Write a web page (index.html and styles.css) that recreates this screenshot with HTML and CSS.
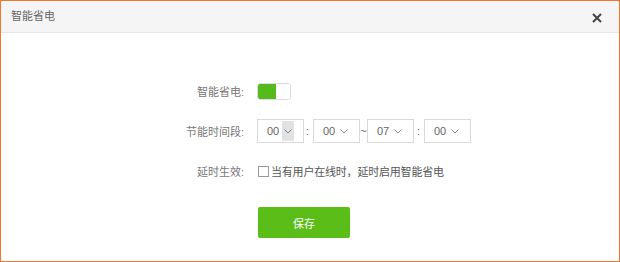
FILE: index.html
```html
<!DOCTYPE html>
<html lang="zh-CN">
<head>
    <meta charset="UTF-8">
    <title>智能省电</title>
    <link rel="stylesheet" href="styles.css">
</head>
<body>
    <div class="dialog">
        <div class="dialog-header">
            <h1>智能省电</h1>
            <span class="close-btn">
                <svg width="10" height="10" viewBox="0 0 10 10"><path d="M1 1L9 9M9 1L1 9" stroke="#444" stroke-width="2" fill="none"/></svg>
            </span>
        </div>

        <div class="dialog-body">
            <div class="form-row">
                <label class="form-label">智能省电:</label>
                <div class="switch">
                    <span class="switch-on"></span>
                    <span class="switch-off"></span>
                </div>
            </div>

            <div class="form-row">
                <label class="form-label">节能时间段:</label>
                <div class="time-select active">
                    <span>00</span>
                    <span class="arrow"><svg width="8" height="5" viewBox="0 0 8 5"><path d="M0.5 0.5L4 4L7.5 0.5" stroke="#888" fill="none"/></svg></span>
                </div>
                <span class="sep sep-colon">:</span>
                <div class="time-select">
                    <span>00</span>
                    <span class="arrow"><svg width="8" height="5" viewBox="0 0 8 5"><path d="M0.5 0.5L4 4L7.5 0.5" stroke="#888" fill="none"/></svg></span>
                </div>
                <span class="sep sep-tilde">~</span>
                <div class="time-select">
                    <span>07</span>
                    <span class="arrow"><svg width="8" height="5" viewBox="0 0 8 5"><path d="M0.5 0.5L4 4L7.5 0.5" stroke="#888" fill="none"/></svg></span>
                </div>
                <span class="sep sep-colon2">:</span>
                <div class="time-select">
                    <span>00</span>
                    <span class="arrow"><svg width="8" height="5" viewBox="0 0 8 5"><path d="M0.5 0.5L4 4L7.5 0.5" stroke="#888" fill="none"/></svg></span>
                </div>
            </div>

            <div class="form-row">
                <label class="form-label">延时生效:</label>
                <span class="checkbox"></span>
                <span class="checkbox-text">当有用户在线时，延时启用智能省电</span>
            </div>

            <div class="form-actions">
                <button class="save-btn">保存</button>
            </div>
        </div>
    </div>
</body>
</html>
```

FILE: styles.css
```css
* {
    margin: 0;
    padding: 0;
    box-sizing: border-box;
}

body {
    font-family: "Liberation Sans", "Noto Sans CJK SC", sans-serif;
    font-size: 11px;
    background: white;
}

.dialog {
    width: 620px;
    height: 262px;
    border: 1px solid #f2772f;
    background: white;
}

.dialog-header {
    height: 32px;
    background: #f5f5f5;
    border-bottom: 1px solid #e6e6e6;
    display: flex;
    align-items: center;
    justify-content: space-between;
    padding: 0 17px 0 10px;
}

.dialog-header h1 {
    font-size: 11px;
    font-weight: normal;
    color: #666;
    margin-top: -3px;
}

.close-btn {
    display: flex;
    margin-top: 2px;
}

.dialog-body {
    padding-top: 46px;
}

.form-row {
    display: flex;
    align-items: center;
    height: 24px;
    margin-bottom: 16px;
}

.form-label {
    width: 245px;
    margin-right: 11px;
    text-align: right;
    color: #777;
    padding-right: 2px;
}

.switch {
    display: flex;
    width: 34px;
    height: 17px;
    border: 1px solid #dcdcdc;
    border-radius: 3px;
    overflow: hidden;
}

.switch-on {
    width: 18px;
    background: #55bb1c;
}

.switch-off {
    flex: 1;
    background: white;
}

.time-select {
    display: flex;
    align-items: center;
    justify-content: space-between;
    width: 47px;
    height: 24px;
    border: 1px solid #d9d9d9;
    padding: 0 11px 0 9px;
    color: #666;
}

.time-select .arrow {
    display: flex;
    align-items: center;
    justify-content: center;
    width: 8px;
    height: 20px;
}

.time-select.active .arrow {
    width: 12px;
    margin-right: -2px;
    background: #e2e2e2;
}

.sep {
    color: #666;
}

.sep-colon {
    width: 9px;
    padding-left: 2px;
}

.sep-tilde {
    width: 7px;
    text-align: center;
}

.sep-colon2 {
    width: 10px;
    padding-left: 3px;
}

.checkbox {
    width: 11px;
    height: 11px;
    border: 1px solid #999;
    background: white;
    margin-left: 1px;
    margin-right: 2px;
}

.checkbox-text {
    color: #555;
    letter-spacing: -0.2px;
}

.form-actions {
    padding-left: 257px;
    padding-top: 8px;
}

.save-btn {
    width: 92px;
    height: 31px;
    border: none;
    border-radius: 2px;
    background: #5bbd18;
    color: white;
    font-family: inherit;
    font-size: 11px;
}
```
